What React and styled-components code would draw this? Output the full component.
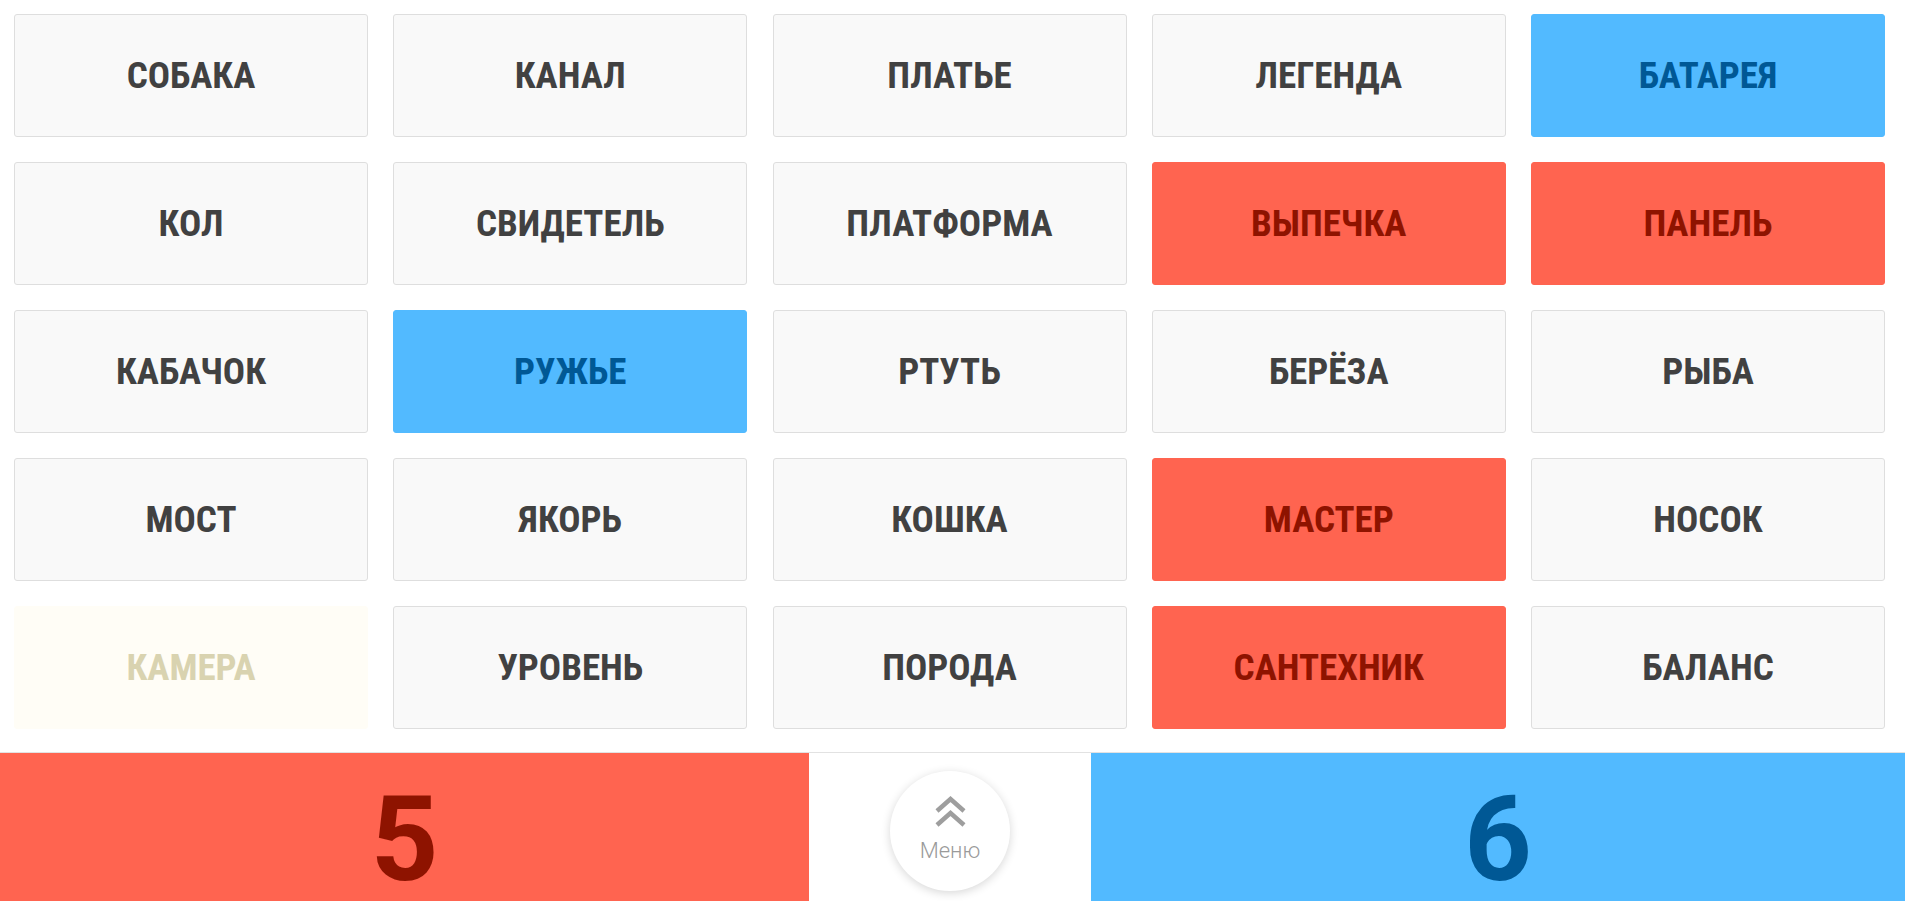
import React from 'react'
import styled, { createGlobalStyle } from 'styled-components'

const GlobalStyle = createGlobalStyle`
  html, body {
    margin: 0;
    padding: 0;
    background: #fff;
    overflow: hidden;
  }
  body {
    font-family: 'Roboto Condensed', 'Roboto', 'Liberation Sans', sans-serif;
  }
`

const words = [
  ['СОБАКА', 'none'], ['КАНАЛ', 'none'], ['ПЛАТЬЕ', 'none'], ['ЛЕГЕНДА', 'none'], ['БАТАРЕЯ', 'blue'],
  ['КОЛ', 'none'], ['СВИДЕТЕЛЬ', 'none'], ['ПЛАТФОРМА', 'none'], ['ВЫПЕЧКА', 'red'], ['ПАНЕЛЬ', 'red'],
  ['КАБАЧОК', 'none'], ['РУЖЬЕ', 'blue'], ['РТУТЬ', 'none'], ['БЕРЁЗА', 'none'], ['РЫБА', 'none'],
  ['МОСТ', 'none'], ['ЯКОРЬ', 'none'], ['КОШКА', 'none'], ['МАСТЕР', 'red'], ['НОСОК', 'none'],
  ['КАМЕРА', 'killer'], ['УРОВЕНЬ', 'none'], ['ПОРОДА', 'none'], ['САНТЕХНИК', 'red'], ['БАЛАНС', 'none'],
]

const palette = {
  none: { bg: '#f9f9f9', fg: '#414141', border: '#dedede' },
  red: { bg: '#ff6450', fg: '#8e1300', border: '#ff6450' },
  blue: { bg: '#52baff', fg: '#005895', border: '#52baff' },
  killer: { bg: '#fffdf6', fg: '#d9d3b0', border: '#fffdf6' },
}

const Board = styled.main`
  display: grid;
  grid-template-columns: repeat(5, 354px);
  grid-auto-rows: 123px;
  column-gap: 25.25px;
  row-gap: 25px;
  padding: 14px 20px 23px 14px;
`

const Card = styled.button`
  display: flex;
  align-items: center;
  justify-content: center;
  border: 1px solid ${(p) => palette[p.$team].border};
  border-radius: 3px;
  background: ${(p) => palette[p.$team].bg};
  color: ${(p) => palette[p.$team].fg};
  font-family: inherit;
  font-weight: 700;
  font-size: 37px;
  padding: 0;
  cursor: pointer;
`

const ScoreBar = styled.footer`
  display: flex;
  height: 148px;
  border-top: 1px solid #e2e2e2;
`

const Score = styled.div`
  flex: ${(p) => (p.$grow ? '1' : '0 0 809px')};
  display: flex;
  align-items: flex-start;
  justify-content: center;
  padding-top: 37px;
  background: ${(p) => (p.$team === 'red' ? '#ff6450' : '#52baff')};
  color: ${(p) => (p.$team === 'red' ? '#8e1300' : '#005895')};
  font-family: 'Roboto', 'Liberation Sans', sans-serif;
  font-weight: 700;
  font-size: 118px;
  line-height: 100px;
`

const MenuSlot = styled.div`
  flex: 0 0 282px;
  display: flex;
  justify-content: center;
  padding-top: 18px;
  background: #fff;
`

const MenuButton = styled.button`
  width: 120px;
  height: 120px;
  border-radius: 50%;
  border: none;
  background: #fff;
  box-shadow: 0 2px 10px rgba(0, 0, 0, 0.16);
  display: flex;
  flex-direction: column;
  align-items: center;
  justify-content: center;
  gap: 12px;
  padding: 0 0 4px;
  cursor: pointer;
`

const MenuLabel = styled.span`
  font-family: 'Roboto', 'Liberation Sans', sans-serif;
  font-weight: 300;
  font-size: 22px;
  color: #9a9a9a;
  line-height: 1;
`

const Chevrons = () => (
  <svg width="33" height="32" viewBox="0 0 33 32" fill="none" stroke="#9e9e9e" strokeWidth="4.5">
    <polyline points="3,15 16.5,3 30,15" />
    <polyline points="3,29 16.5,17 30,29" />
  </svg>
)

export default function App() {
  return (
    <>
      <GlobalStyle />
      <Board>
        {words.map(([w, t]) => (
          <Card key={w} $team={t}>{w}</Card>
        ))}
      </Board>
      <ScoreBar>
        <Score $team="red">5</Score>
        <MenuSlot>
          <MenuButton>
            <Chevrons />
            <MenuLabel>Меню</MenuLabel>
          </MenuButton>
        </MenuSlot>
        <Score $team="blue" $grow>6</Score>
      </ScoreBar>
    </>
  )
}
